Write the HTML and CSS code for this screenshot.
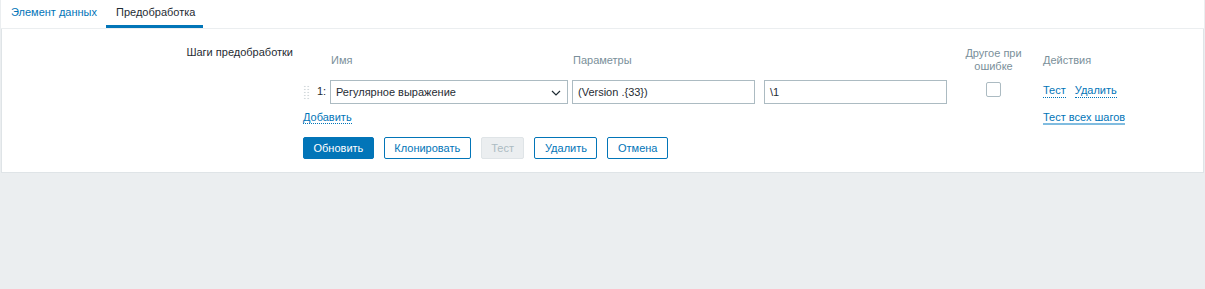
FILE: index.html
```html
<!DOCTYPE html>
<html lang="ru">
<head>
<meta charset="utf-8">
<title>Предобработка</title>
<link rel="stylesheet" href="styles.css">
</head>
<body>
<div class="page">
  <nav class="tabs">
    <a class="tab">Элемент данных</a>
    <a class="tab tab-active">Предобработка</a>
  </nav>
  <div class="panel">
    <div class="form">
      <div class="form-label">Шаги предобработки</div>
      <div class="form-field">
        <div class="steps">
          <div class="hd"></div>
          <div class="hd hd-name">Имя</div>
          <div class="hd hd-params">Параметры</div>
          <div class="hd hd-other">Другое при ошибке</div>
          <div class="hd hd-actions">Действия</div>

          <div class="cell cell-num"><span class="drag"></span><span class="num">1:</span></div>
          <div class="cell">
            <div class="select">
              <span>Регулярное выражение</span>
              <svg class="chev" width="10" height="6" viewBox="0 0 10 6"><path d="M1 1l4 4 4-4" fill="none" stroke="#1f2c33" stroke-width="1.2"/></svg>
            </div>
          </div>
          <div class="cell cell-params">
            <div class="input">(Version .{33})</div>
            <div class="input">\1</div>
          </div>
          <div class="cell cell-other"><span class="checkbox"></span></div>
          <div class="cell cell-actions">
            <a class="link">Тест</a>
            <a class="link">Удалить</a>
          </div>

          <div class="foot foot-add"><a class="link">Добавить</a></div>
          <div class="foot foot-all"><a class="link-solid">Тест всех шагов</a></div>
        </div>
        <div class="buttons">
          <button class="btn btn-primary">Обновить</button>
          <button class="btn btn-alt">Клонировать</button>
          <button class="btn btn-disabled">Тест</button>
          <button class="btn btn-alt">Удалить</button>
          <button class="btn btn-alt">Отмена</button>
        </div>
      </div>
    </div>
  </div>
</div>
</body>
</html>
```

FILE: styles.css
```css
html, body {
  margin: 0;
  padding: 0;
}
body {
  background: #ebeef0;
  font-family: "Liberation Sans", Arial, sans-serif;
  font-size: 11px;
  color: #1f2c33;
}
.page {
  margin: 0 1px;
  background: #ffffff;
}
.tabs {
  display: flex;
  height: 28px;
  border-bottom: 1px solid #ebeef0;
  background: #ffffff;
}
.tab {
  box-sizing: border-box;
  height: 28px;
  padding: 5px 9px 0 10px;
  line-height: 15px;
  color: #0275b8;
  border-bottom: 3px solid transparent;
  cursor: pointer;
}
.tab-active {
  color: #1f2c33;
  border-bottom-color: #0275b8;
  padding: 5px 8px 0 10px;
}
.panel {
  border: 1px solid #dfe4e7;
  border-top: none;
  padding: 17px 0 13px;
}
.form {
  display: grid;
  grid-template-columns: 291px 1fr;
  column-gap: 10px;
}
.form-label {
  text-align: right;
  line-height: 14px;
  margin-top: -1px;
}
.steps {
  display: grid;
  grid-template-columns: 27px 242px 375px 93px 1fr;
  grid-template-rows: 28px 24px 14px;
  row-gap: 6px;
  align-items: center;
}
.hd {
  color: #7a8f9a;
  line-height: 13px;
}
.hd-name { padding-left: 1px; }
.hd-params { padding-left: 1px; }
.hd-other { text-align: center; width: 70px; justify-self: center; }
.hd-actions { padding-left: 3px; }
.cell {
  display: flex;
  align-items: center;
  height: 24px;
}
.cell-num {
  gap: 7px;
}
.drag {
  display: block;
  width: 7px;
  height: 15px;
  margin-top: 1px;
  background-image: radial-gradient(circle, #d3d9dc 0.9px, transparent 1.1px);
  background-size: 3.5px 3px;
}
.num {
  line-height: 14px;
  margin-top: -3px;
}
.select {
  box-sizing: border-box;
  width: 238px;
  height: 24px;
  border: 1px solid #acbbc2;
  display: flex;
  align-items: center;
  justify-content: space-between;
  padding: 0 6px 0 5px;
  background: #fff;
}
.chev { margin-top: 1px; }
.cell-params {
  gap: 9px;
}
.input {
  box-sizing: border-box;
  width: 183px;
  height: 24px;
  border: 1px solid #acbbc2;
  padding: 0 5px;
  line-height: 22px;
  background: #fff;
}
.cell-other {
  justify-content: center;
}
.checkbox {
  display: block;
  box-sizing: border-box;
  width: 15px;
  height: 15px;
  border: 1px solid #acbbc2;
  border-radius: 2px;
  margin-top: -5px;
}
.cell-actions {
  padding-left: 3px;
  gap: 9px;
}
.link {
  color: #0275b8;
  line-height: 14px;
  border-bottom: 1px dotted #0275b8;
  cursor: pointer;
}
.cell-actions .link { margin-top: -3px; }
.link-solid {
  color: #0275b8;
  line-height: 14px;
  border-bottom: 2px solid #80bce0;
  cursor: pointer;
}
.foot {
  line-height: 14px;
  height: 15px;
}
.foot-add { grid-column: 1 / 3; }
.foot-all { grid-column: 5 / 6; padding-left: 3px; }
.buttons {
  display: flex;
  gap: 10px;
  margin-top: 13px;
}
.btn {
  box-sizing: border-box;
  height: 22px;
  padding: 0 9.5px;
  border-radius: 2px;
  font-family: "Liberation Sans", Arial, sans-serif;
  font-size: 11px;
  line-height: 20px;
  border: 1px solid #0275b8;
  background: #ffffff;
  color: #0275b8;
  cursor: pointer;
}
.btn-primary {
  background: #0275b8;
  color: #ffffff;
}
.btn-disabled {
  background: #ebeef0;
  border-color: #dfe4e7;
  color: #acbbc2;
  cursor: default;
}
```
